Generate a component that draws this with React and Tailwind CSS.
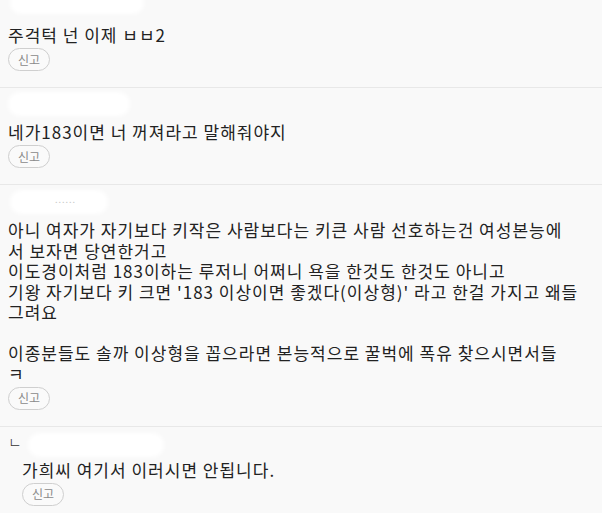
import React from 'react'

const comments = [
  {
    id: 1,
    head: 'h-[25px]',
    blob: 'left-[2px] top-[-8px] w-[134px] h-[22px]',
    lines: ['주걱턱 넌 이제 ㅂㅂ2'],
  },
  {
    id: 2,
    head: 'h-[34px]',
    blob: 'left-0 top-[4px] w-[122px] h-[24px]',
    lines: ['네가183이면 너 꺼져라고 말해줘야지'],
  },
  {
    id: 3,
    head: 'h-[35px]',
    blob: 'left-[2px] top-[5px] w-[98px] h-[24px]',
    dots: true,
    lines: [
      '아니 여자가 자기보다 키작은 사람보다는 키큰 사람 선호하는건 여성본능에',
      '서 보자면 당연한거고',
      '이도경이처럼 183이하는 루저니 어쩌니 욕을 한것도 한것도 아니고',
      "기왕 자기보다 키 크면 '183 이상이면 좋겠다(이상형)' 라고 한걸 가지고 왜들",
      '그려요',
      '',
      '이종분들도 솔까 이상형을 꼽으라면 본능적으로 꿀벅에 폭유 찾으시면서들',
      'ㅋ',
    ],
  },
  {
    id: 4,
    head: 'h-[33px]',
    blob: 'left-[20px] top-[6px] w-[136px] h-[24px]',
    reply: true,
    lines: ['가희씨 여기서 이러시면 안됩니다.'],
  },
]

const Comment = ({ c }) => (
  <div className={`px-2 pb-4 ${c.id < 4 ? 'border-b border-[#e8e8e8]' : ''}`}>
    <div className={`relative ${c.head}`}>
      <div className={`absolute rounded-full bg-white blur-[2px] ${c.blob}`} />
      {c.dots && (
        <span className="absolute left-[47px] top-[10px] text-[9px] leading-none tracking-[1px] text-[#c8c8c8]">
          ......
        </span>
      )}
      {c.reply && (
        <span className="absolute left-0 top-[7px] text-[15px] font-light leading-none text-[#333]">ㄴ</span>
      )}
    </div>
    <div className={c.reply ? 'pl-[14px]' : ''}>
      <div className="text-[17px] leading-[20.5px] tracking-[1px] text-[#222] whitespace-nowrap">
        {c.lines.map((l, i) => (
          <p key={i} className="h-[20.5px]">
            {l}
          </p>
        ))}
      </div>
      <button className="mt-[1px] h-[23px] rounded-full border border-[#cfcfcf] bg-[#fafafa] px-[9px] text-[12px] leading-none text-[#8a8a8a]">
        신고
      </button>
    </div>
  </div>
)

export default function App() {
  return (
    <div
      className="h-[513px] w-[602px] overflow-hidden bg-[#f9f9f9]"
      style={{ fontFamily: '"Noto Sans CJK KR", "Noto Sans", sans-serif' }}
    >
      {comments.map((c) => (
        <Comment key={c.id} c={c} />
      ))}
    </div>
  )
}
